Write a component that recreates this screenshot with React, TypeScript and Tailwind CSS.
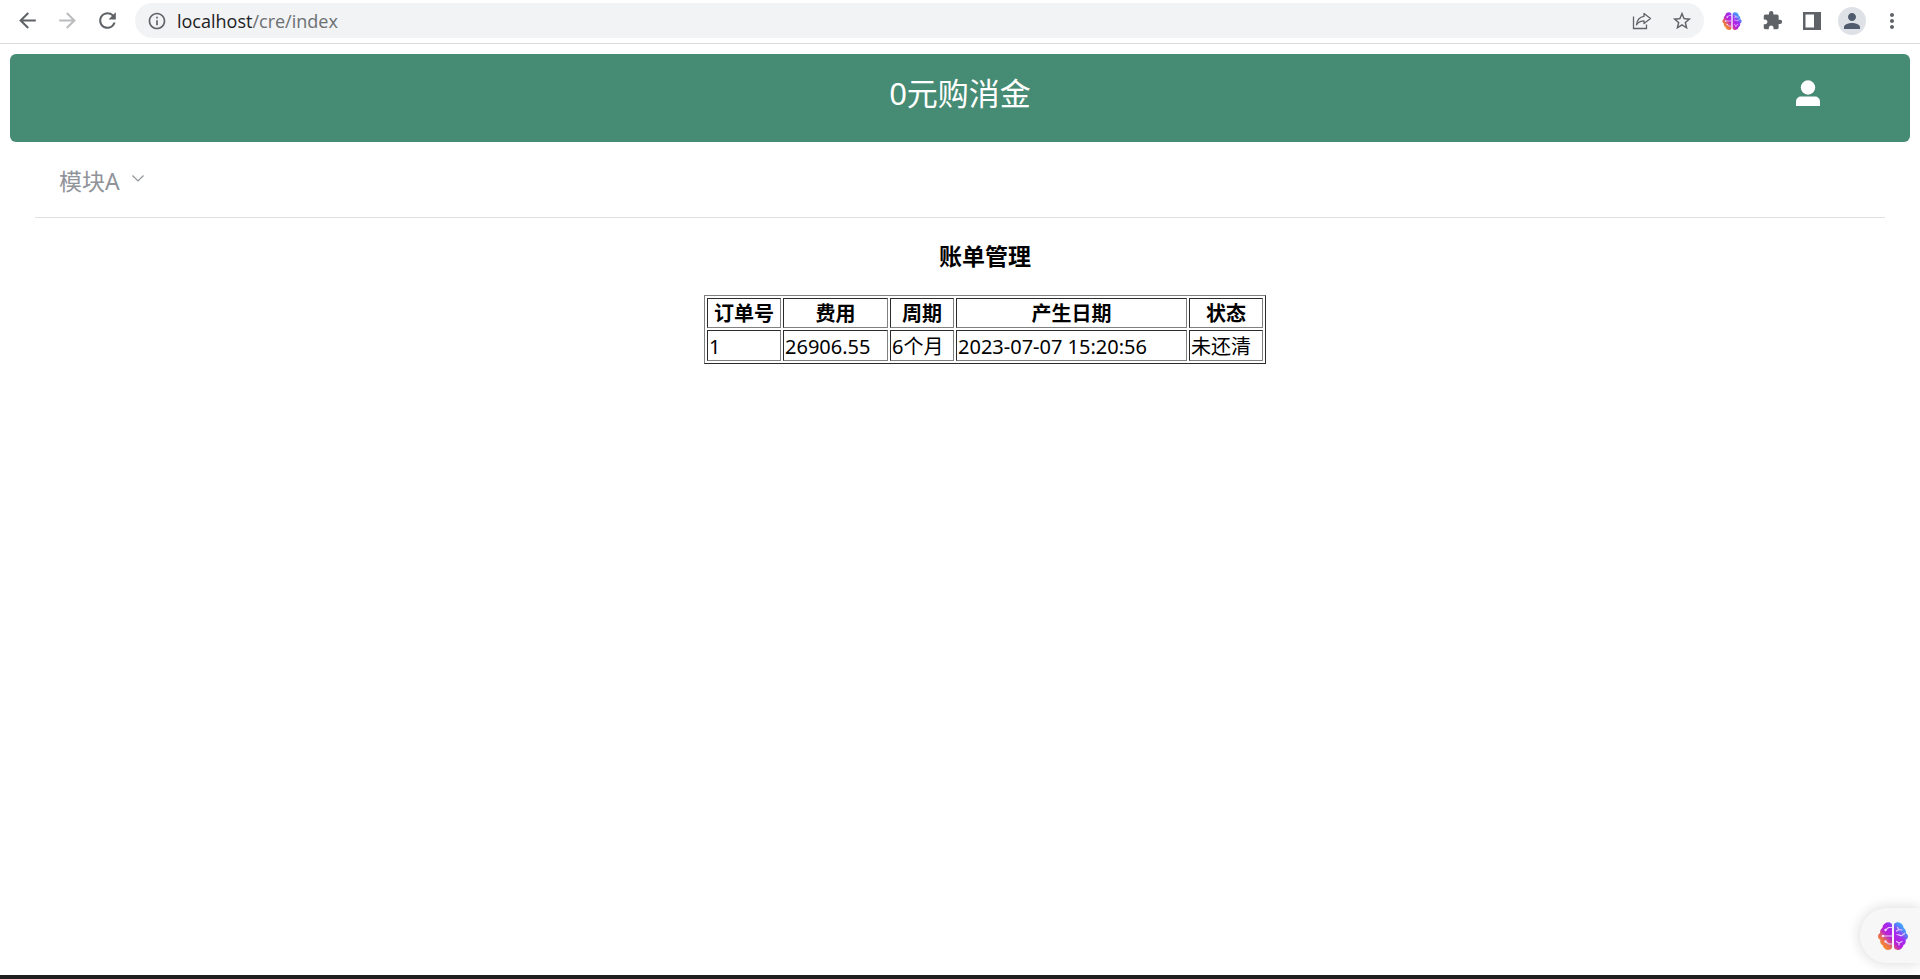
import type { ReactNode } from "react";
import {
  MdArrowBack,
  MdArrowForward,
  MdExtension,
  MdInfoOutline,
  MdMoreVert,
  MdPerson,
  MdRefresh,
  MdStarOutline,
} from "react-icons/md";

type Bill = {
  id: number;
  fee: string;
  period: string;
  createdAt: string;
  status: string;
};

const columns: { label: string; width: string }[] = [
  { label: "订单号", width: "w-[74px]" },
  { label: "费用", width: "w-[105px]" },
  { label: "周期", width: "w-[64px]" },
  { label: "产生日期", width: "w-[231px]" },
  { label: "状态", width: "w-[74px]" },
];

const bills: Bill[] = [
  { id: 1, fee: "26906.55", period: "6个月", createdAt: "2023-07-07 15:20:56", status: "未还清" },
];

const cell = "border border-t-[#2c2c2c] border-l-[#2c2c2c] border-r-[#808080] border-b-[#808080] px-px";

function IconButton({ label, children }: { label: string; children: ReactNode }) {
  return (
    <button aria-label={label} className="flex h-8 w-10 shrink-0 items-center justify-center text-[#5f6368]">
      {children}
    </button>
  );
}

function BrainIcon({ id, className }: { id: string; className: string }) {
  return (
    <svg viewBox="0 0 30 28" className={className} aria-hidden="true">
      <defs>
        <linearGradient id={id} x1="3" y1="26" x2="27" y2="3" gradientUnits="userSpaceOnUse">
          <stop offset="0" stopColor="#ff9a1f" />
          <stop offset="0.22" stopColor="#e8704f" />
          <stop offset="0.42" stopColor="#b91fd6" />
          <stop offset="0.64" stopColor="#a42af0" />
          <stop offset="0.86" stopColor="#4b93fb" />
          <stop offset="1" stopColor="#3fb2ff" />
        </linearGradient>
      </defs>
      <g fill={`url(#${id})`}>
        <path d="M14 2.2C12.4 0 9.3-.4 7.2 1.2 5.400 2.200 4.500 4 4.400 6 2.500 7 1.700 9 2.200 11 .6 12 0 13.200 0 14.400c0 1.500.9 2.700 2.300 3.400-.4 2.200.4 4.200 2.200 5.300.5 2.700 2.500 4.700 5.200 4.800 1.900.1 3.400-.6 4.300-1.900z" />
        <path d="M16 2.200C17.600 0 20.700-.4 22.800 1.200c1.800 1 2.700 2.800 2.800 4.800 1.900 1 2.700 3 2.200 5 1.600 1 2.200 2.200 2.200 3.400 0 1.500-.9 2.700-2.300 3.400.4 2.200-.4 4.200-2.200 5.300-.5 2.700-2.500 4.700-5.200 4.800-1.900.1-3.400-.6-4.300-1.900z" />
      </g>
      <g fill="none" stroke="#eac6ff" strokeWidth="1.200" strokeLinecap="round">
        <path d="M14 5.500h-3.500L7.500 8M5 14h9M14 22h-3.500L7.500 19.500" />
        <path d="M18.500 9l2.500-1.500L19.500 5.500M21 7.500l3 .5M19 12.500c2 0 3 1.500 5 1l2.500-2M18.500 19.500l2.500 1.500v2M21 21l3-1.500" />
      </g>
      <g fill="#f3dcff">
        <circle cx="7.500" cy="8" r="1.200" />
        <circle cx="5" cy="14" r="1.300" />
        <circle cx="7.500" cy="19.500" r="1.200" />
      </g>
    </svg>
  );
}

function BrowserBar() {
  return (
    <div className="flex items-center border-b border-[#dadce0] pt-[3px] pr-2 pb-[5px] pl-[7px]">
      <IconButton label="Back"><MdArrowBack size={25} /></IconButton>
      <button aria-label="Forward" disabled className="flex h-8 w-10 shrink-0 items-center justify-center text-[#babcbe]">
        <MdArrowForward size={25} />
      </button>
      <IconButton label="Reload"><MdRefresh size={25} /></IconButton>
      <div className="ml-2 flex h-[35px] flex-1 items-center rounded-full bg-[#f1f3f4] pr-0.5 pl-3">
        <MdInfoOutline size={20} className="text-[#5f6368]" />
        <div className="ml-[10px] flex-1 font-['Open_Sans',sans-serif] text-[18px] leading-6 text-[#6b6f73]">
          <span className="text-[#202124]">localhost</span>/cre/index
        </div>
        <IconButton label="Share">
          <svg viewBox="0 0 20 18" className="h-[18px] w-5" fill="none" stroke="currentColor" strokeWidth="1.3" aria-hidden="true">
            <path d="M1.500 4.500v12h13v-4" />
            <path d="M12 1.500l6.500 5-6.500 5V8.800C8.500 8.800 6.300 10 4.500 12.800 5 8 7.500 4.900 12 4.300z" strokeLinejoin="round" />
          </svg>
        </IconButton>
        <IconButton label="Bookmark"><MdStarOutline size={22} /></IconButton>
      </div>
      <div className="ml-2 flex items-center">
        <IconButton label="Assistant"><BrainIcon id="brain-small" className="h-[18px] w-5" /></IconButton>
        <IconButton label="Extensions"><MdExtension size={21} /></IconButton>
        <IconButton label="Side panel">
          <svg viewBox="0 0 18 18" className="size-[18px]" aria-hidden="true">
            <path fill="currentColor" fillRule="evenodd" d="M0 0h18v18H0zM2.500 2.500v13H11v-13z" />
          </svg>
        </IconButton>
        <IconButton label="Profile">
          <span className="flex size-7 items-center justify-center rounded-full bg-[#dee1e6] text-[#505b6e]">
            <MdPerson size={24} />
          </span>
        </IconButton>
        <IconButton label="Menu"><MdMoreVert size={24} /></IconButton>
      </div>
    </div>
  );
}

function Header() {
  return (
    <header className="grid h-[88px] grid-cols-[1fr_auto_1fr] items-center rounded-[6px] bg-[#468b73] px-[90px] pb-[11px] text-white">
      <h1 className="col-start-2 text-[31px] leading-10">0元购消金</h1>
      <button aria-label="用户" className="justify-self-end">
        <svg viewBox="0 0 24 26" className="h-[26px] w-6" fill="currentColor" aria-hidden="true">
          <circle cx="12" cy="7.500" r="7.200" />
          <path d="M0 26v-4.500a5 5 0 0 1 5-5h14a5 5 0 0 1 5 5V26z" />
        </svg>
      </button>
    </header>
  );
}

function BillTable() {
  return (
    <table className="table-fixed border-separate border-spacing-[2px] border border-t-[#808080] border-r-[#2c2c2c] border-b-[#2c2c2c] border-l-[#808080] text-[20px]">
      <thead>
        <tr>
          {columns.map((column) => (
            <th key={column.label} className={`${cell} ${column.width} pt-[2px] leading-[26px] font-bold`}>
              {column.label}
            </th>
          ))}
        </tr>
      </thead>
      <tbody className="leading-[27px]">
        {bills.map((bill) => (
          <tr key={bill.id}>
            <td className={`${cell} pt-[2px]`}>{bill.id}</td>
            <td className={`${cell} pt-[2px]`}>{bill.fee}</td>
            <td className={`${cell} pt-[2px]`}>{bill.period}</td>
            <td className={`${cell} pt-[2px]`}>{bill.createdAt}</td>
            <td className={`${cell} pt-[2px]`}>{bill.status}</td>
          </tr>
        ))}
      </tbody>
    </table>
  );
}

export default function App() {
  return (
    <div className="flex min-h-screen flex-col bg-white font-['Noto_Sans','Noto_Sans_CJK_SC',sans-serif] text-black">
      <BrowserBar />
      <div className="flex-1 px-[10px] pt-[10px]">
        <Header />
        <nav className="mx-[25px] flex h-[76px] items-center border-b border-[#e0e0e0] pt-[2px] pl-6">
          <button className="flex items-center gap-3 text-[23px] leading-8 text-[#909399]">
            模块A
            <svg viewBox="0 0 12 7" className="mb-1 h-[7px] w-3" fill="none" stroke="currentColor" strokeWidth="1.200" aria-hidden="true">
              <path d="M.5.500L6 6 11.500.500" />
            </svg>
          </button>
        </nav>
        <main className="flex flex-col items-center pt-[23px] pl-[50px]">
          <h3 className="mb-[23px] text-[23px] leading-[31px] font-bold">账单管理</h3>
          <BillTable />
        </main>
      </div>
      <div className="h-1 bg-[#1f1f1f]" />
      <button
        aria-label="Assistant"
        className="fixed right-0 bottom-4 flex h-[55px] w-[60px] items-center rounded-l-full bg-[#f7f7f7] pl-[18px] shadow-[0_0_14px_rgba(0,0,0,0.16)]"
      >
        <BrainIcon id="brain-large" className="h-7 w-[30px]" />
      </button>
    </div>
  );
}
